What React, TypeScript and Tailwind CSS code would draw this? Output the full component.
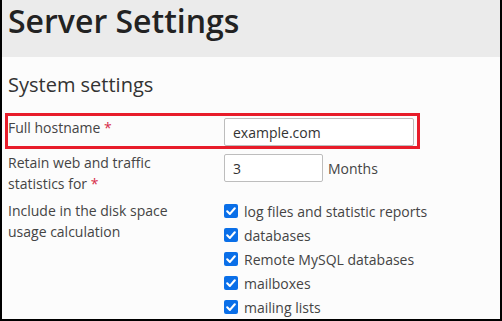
import React from 'react';

const options = [
  'log files and statistic reports',
  'databases',
  'Remote MySQL databases',
  'mailboxes',
  'mailing lists',
];

function Check() {
  return (
    <span className="flex h-[14px] w-[14px] shrink-0 items-center justify-center rounded-[2px] bg-[#0a6fe8]">
      <svg viewBox="0 0 14 14" className="h-[14px] w-[14px]">
        <path d="M3.2 7.3 L5.9 9.9 L10.8 4.3" fill="none" stroke="#fff" strokeWidth="2.1" strokeLinecap="round" strokeLinejoin="round" />
      </svg>
    </span>
  );
}

function Required() {
  return <span className="text-[#d62d4a]"> *</span>;
}

export default function App() {
  return (
    <div
      className="h-[321px] w-[502px] overflow-hidden border-x-2 border-b-2 border-black bg-[#fcfcfc] text-[#444]"
      style={{ fontFamily: '"Open Sans", "Noto Sans", sans-serif' }}
    >
      {/* Header */}
      <div className="h-[57px] bg-[#ebebeb] pl-[6px] pt-[5px]">
        <h1 className="text-[32px] font-semibold leading-[32px] text-[#222]">Server Settings</h1>
      </div>

      <div className="pl-[3px]">
        <h2 className="mt-[16px] pl-[3px] text-[20px] leading-[24px] text-[#333]">System settings</h2>

        {/* Full hostname (highlighted) */}
        <div className="mt-[16px] flex h-[36px] w-[415px] items-start border-[3px] border-[#e81c2a] text-[14px]">
          <div className="w-[216px] pt-[1px] leading-[21px]">
            Full hostname<Required />
          </div>
          <div className="mt-[2px] flex h-[28px] w-[190px] items-center rounded-[2px] border border-[#bdbdbd] bg-white px-[8px] text-[#333]">
            example.com
          </div>
        </div>

        {/* Retain stats */}
        <div className="flex items-start px-[3px] text-[14px]">
          <div className="w-[216px] pt-[3px] leading-[21px]">
            Retain web and traffic
            <br />
            statistics for<Required />
          </div>
          <div className="mt-[5px] flex items-center gap-[5px]">
            <div className="flex h-[28px] w-[99px] items-center rounded-[2px] border border-[#bdbdbd] bg-white px-[8px] text-[#333]">
              3
            </div>
            <span>Months</span>
          </div>
        </div>

        {/* Disk space */}
        <div className="mt-[5px] flex items-start px-[3px] text-[14px]">
          <div className="w-[216px] pt-[1px] leading-[21px]">
            Include in the disk space
            <br />
            usage calculation
          </div>
          <div className="flex flex-col">
            {options.map(o => (
              <label key={o} className="flex h-[24px] items-center gap-[6px]">
                <Check />
                <span>{o}</span>
              </label>
            ))}
          </div>
        </div>
      </div>
    </div>
  );
}
